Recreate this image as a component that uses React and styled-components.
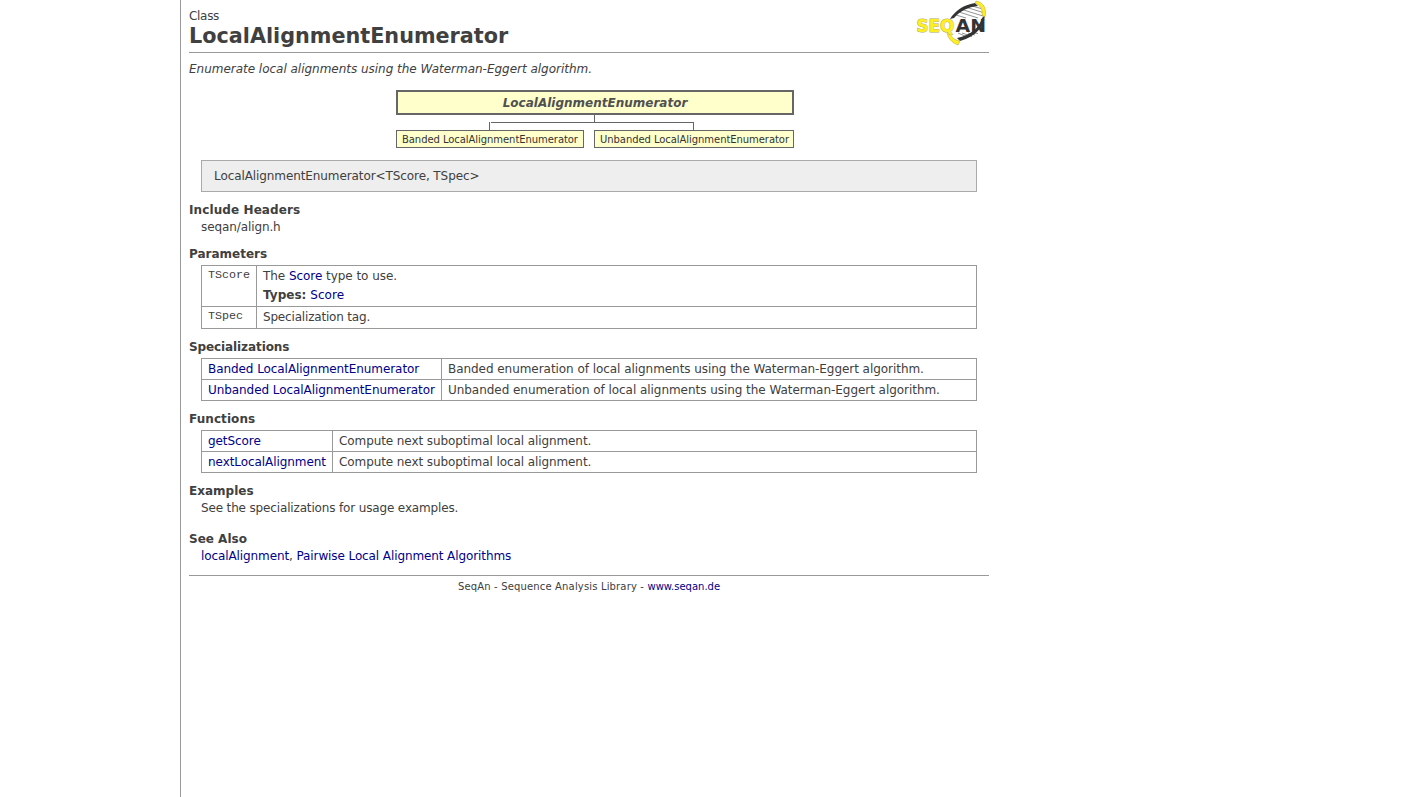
import React from "react";
import styled, { createGlobalStyle } from "styled-components";

const GlobalStyle = createGlobalStyle`
  body {
    margin: 0;
    background: #fff;
    color: #404040;
    font-family: Verdana, "DejaVu Sans", sans-serif;
    font-size: 12px;
    line-height: 17px;
  }
`;

const Page = styled.main`
  box-sizing: border-box;
  width: 809px;
  min-height: 100vh;
  margin-left: 180px;
  padding-left: 8px;
  border-left: 1px solid #999;
`;

const Header = styled.header`
  display: flex;
  justify-content: space-between;
  box-sizing: border-box;
  height: 53px;
  padding: 8px 3px 0 0;
  border-bottom: 1px solid #999;
`;

const Kind = styled.div`
  height: 15px;
  letter-spacing: -0.3px;
`;

const Title = styled.h1`
  margin: 0;
  font-size: 20.75px;
  line-height: 26px;
`;

const Logo = styled.svg`
  width: 72px;
  height: 46px;
  margin: -8px -2px 0 0;
`;

const Summary = styled.p`
  margin: 8px 0 12px;
  font-style: italic;
  letter-spacing: -0.02px;
`;

const Diagram = styled.div`
  width: 398px;
  margin-left: 207px;
`;

const RootNode = styled.div`
  box-sizing: border-box;
  height: 25px;
  border: 2px solid #666;
  background: #ffffcc;
  color: #505050;
  text-align: center;
  font-weight: bold;
  font-style: italic;
  line-height: 23px;
`;

const Connector = styled.svg`
  display: block;
  width: 398px;
  height: 15px;
`;

const Leaves = styled.div`
  display: flex;
  justify-content: space-between;
`;

const Leaf = styled.div`
  box-sizing: border-box;
  width: ${(p) => p.$width}px;
  height: 18px;
  border: 1px solid #666;
  background: #ffffcc;
  color: #333;
  padding-left: 5px;
  font-size: 10px;
  line-height: 17px;
  white-space: nowrap;
  letter-spacing: -0.06px;
`;

const Signature = styled.div`
  box-sizing: border-box;
  height: 32px;
  margin: 12px 12px 9px;
  padding-left: 12px;
  border: 1px solid #aaa;
  background: #eee;
  line-height: 31px;
  letter-spacing: -0.09px;
`;

const Section = styled.section`
  margin-bottom: ${(p) => p.$gap}px;
`;

const Heading = styled.h2`
  margin: 0;
  padding-top: 1px;
  font-size: 12px;
  line-height: 17px;
  letter-spacing: ${(p) => p.$track || 0}px;
`;

const Text = styled.div`
  margin-left: 12px;
  letter-spacing: ${(p) => p.$track || 0}px;
`;

const Table = styled.div`
  width: 774px;
  margin: 2px 0 0 12px;
  border: 1px solid #999;
`;

const Row = styled.div`
  display: flex;
  height: ${(p) => p.$height || 20}px;

  & + & {
    border-top: 1px solid #999;
  }
`;

const Term = styled.div`
  box-sizing: border-box;
  width: ${(p) => p.$width}px;
  padding: 2px 0 0 6px;
  border-right: 1px solid #999;
  white-space: nowrap;
  letter-spacing: -0.07px;
`;

const CodeTerm = styled(Term)`
  padding-top: 1px;
  font-family: "Courier New", "Liberation Mono", monospace;
  font-size: 11.7px;
  letter-spacing: 0;
`;

const Detail = styled.div`
  padding: 2px 0 0 6px;
  white-space: nowrap;
  letter-spacing: ${(p) => p.$track || 0}px;
`;

const Types = styled.div`
  margin-top: 2px;
  letter-spacing: 0.03px;
`;

const Link = styled.a`
  color: #000088;
  text-decoration: none;
`;

const Footer = styled.footer`
  border-top: 1px solid #999;
  padding-top: 2px;
  text-align: center;
  font-size: 10px;
  letter-spacing: 0.16px;

  ${Link} {
    letter-spacing: 0;
  }
`;

function SeqanLogo() {
  return (
    <Logo viewBox="0 0 72 46" role="img" aria-label="SeqAn">
      <path
        d="M40 15L50 18M43 12L62 18M46 9.5L67 16M51 7.5L67 12.5M56 6L65 8.5M42 33L50 36.5M46 33L56 36.5M52 33L59 35M58 33L62 33.5"
        stroke="#888"
        strokeWidth="0.9"
      />
      <path d="M34 19C39 11 47 5 59 3L62 6C52 7 44 11 38 18Z" fill="#333" />
      <path d="M69 15C68 26 61 36 44 41L41 38C55 35 63 28 66 18Z" fill="#333" />
      <path d="M60 1C67 2 71 8 69 17L66 15C67 9 64 5 59 3Z" fill="#ffee22" stroke="#aaa33c" strokeWidth=".5" />
      <path d="M33 31C35 37 38 40 44 41L42 45C36 43 32 38 31 33Z" fill="#ffee22" stroke="#aaa33c" strokeWidth=".5" />
      <g fontFamily="DejaVu Sans, sans-serif" fontWeight="bold" fontSize="18.5">
        <text
          x="0.5"
          y="31.7"
          textLength="37.7"
          lengthAdjust="spacingAndGlyphs"
          fill="#ffee22"
          stroke="#b0ac60"
          strokeWidth="1"
          paintOrder="stroke"
        >
          SEQ
        </text>
        <text x="39.5" y="31.7" textLength="30.5" lengthAdjust="spacingAndGlyphs" fill="#333">
          AN
        </text>
      </g>
    </Logo>
  );
}

export default function App() {
  return (
    <>
      <GlobalStyle />
      <Page>
        <Header>
          <div>
            <Kind>Class</Kind>
            <Title>LocalAlignmentEnumerator</Title>
          </div>
          <SeqanLogo />
        </Header>
        <Summary>Enumerate local alignments using the Waterman-Eggert algorithm.</Summary>

        <Diagram>
          <RootNode>LocalAlignmentEnumerator</RootNode>
          <Connector viewBox="0 0 398 15" shapeRendering="crispEdges">
            <path d="M198.5 0V7M95 7.5H298M93.5 7V15M297.5 7V15" fill="none" stroke="#666" />
          </Connector>
          <Leaves>
            <Leaf $width={188}>Banded LocalAlignmentEnumerator</Leaf>
            <Leaf $width={200}>Unbanded LocalAlignmentEnumerator</Leaf>
          </Leaves>
        </Diagram>

        <Signature>LocalAlignmentEnumerator&lt;TScore, TSpec&gt;</Signature>

        <Section $gap={9}>
          <Heading $track={0.1}>Include Headers</Heading>
          <Text $track={-0.1}>seqan/align.h</Text>
        </Section>

        <Section $gap={9}>
          <Heading>Parameters</Heading>
          <Table>
            <Row $height={40}>
              <CodeTerm $width={55}>TScore</CodeTerm>
              <Detail $track={-0.05}>
                The <Link>Score</Link> type to use.
                <Types>
                  <b>Types:</b> <Link>Score</Link>
                </Types>
              </Detail>
            </Row>
            <Row $height={21}>
              <CodeTerm $width={55}>TSpec</CodeTerm>
              <Detail $track={-0.18}>Specialization tag.</Detail>
            </Row>
          </Table>
        </Section>

        <Section $gap={9}>
          <Heading $track={-0.1}>Specializations</Heading>
          <Table>
            <Row>
              <Term $width={240}>
                <Link>Banded LocalAlignmentEnumerator</Link>
              </Term>
              <Detail $track={-0.05}>
                Banded enumeration of local alignments using the Waterman-Eggert algorithm.
              </Detail>
            </Row>
            <Row>
              <Term $width={240}>
                <Link>Unbanded LocalAlignmentEnumerator</Link>
              </Term>
              <Detail $track={-0.045}>
                Unbanded enumeration of local alignments using the Waterman-Eggert algorithm.
              </Detail>
            </Row>
          </Table>
        </Section>

        <Section $gap={9}>
          <Heading $track={0.07}>Functions</Heading>
          <Table>
            <Row>
              <Term $width={131}>
                <Link>getScore</Link>
              </Term>
              <Detail $track={-0.09}>Compute next suboptimal local alignment.</Detail>
            </Row>
            <Row>
              <Term $width={131}>
                <Link>nextLocalAlignment</Link>
              </Term>
              <Detail $track={-0.09}>Compute next suboptimal local alignment.</Detail>
            </Row>
          </Table>
        </Section>

        <Section $gap={13}>
          <Heading>Examples</Heading>
          <Text $track={-0.15}>See the specializations for usage examples.</Text>
        </Section>

        <Section $gap={10}>
          <Heading>See Also</Heading>
          <Text $track={-0.1}>
            <Link>localAlignment</Link>, <Link>Pairwise Local Alignment Algorithms</Link>
          </Text>
        </Section>

        <Footer>
          SeqAn - Sequence Analysis Library - <Link>www.seqan.de</Link>
        </Footer>
      </Page>
    </>
  );
}
